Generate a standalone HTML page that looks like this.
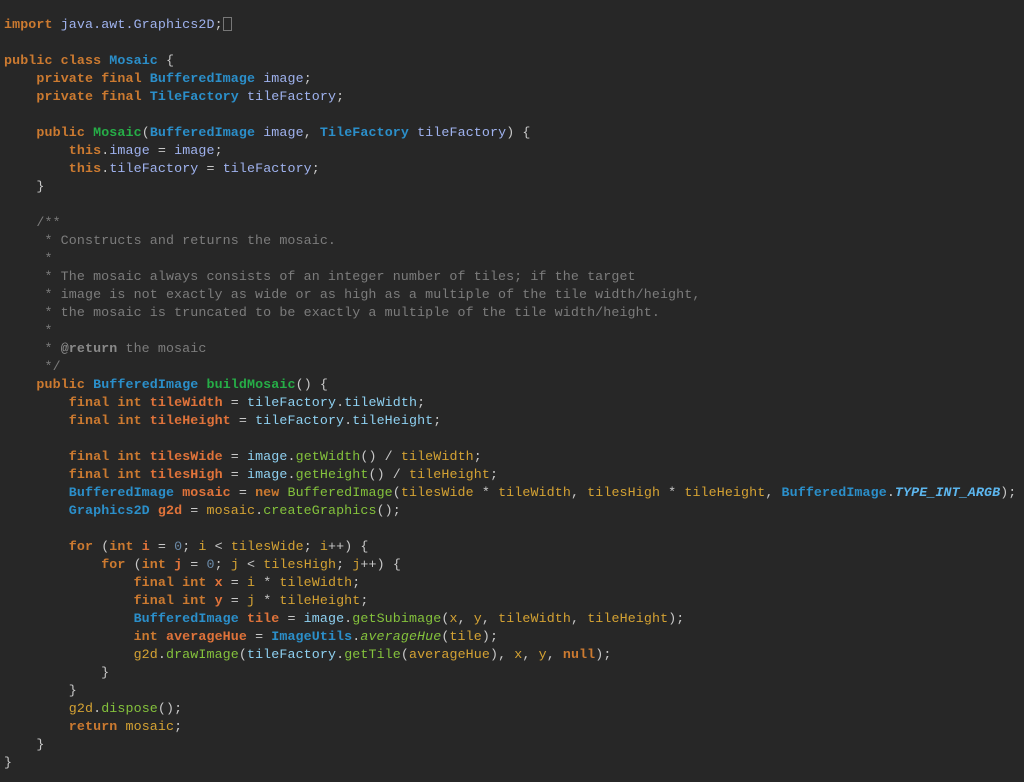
<!DOCTYPE html>
<html><head><meta charset="utf-8"><style>
html,body{margin:0;padding:0;background:#272727;width:1024px;height:782px;overflow:hidden}
pre{margin:0;padding:17px 0 0 4px;font-family:"Liberation Mono",monospace;font-size:13.33px;line-height:18px;color:#c8c8c8;letter-spacing:0.1px}
.k{color:#cc7a30;font-weight:bold}
.t{color:#2b8fca;font-weight:bold}
.f{color:#9fb2ee}
.p{color:#d4a233}
.v{color:#e0733a;font-weight:bold}
.m{color:#84c23c}
.g{color:#26ad47;font-weight:bold}
.c{color:#7c7c7c}
.cb{color:#8a8a8a;font-weight:bold}
.n{color:#6b8aa8}
.s{color:#5cb6ee;font-style:italic;font-weight:bold}
.i{color:#8ed0f0}
.cur{display:inline-block;width:9px;height:14px;border:1px solid #777;vertical-align:-3px;box-sizing:border-box}
</style></head><body><pre><span class="k">import</span> <span class="f">java.awt.Graphics2D</span>;<span class="cur"></span>

<span class="k">public class</span> <span class="t">Mosaic</span> {
    <span class="k">private final</span> <span class="t">BufferedImage</span> <span class="f">image</span>;
    <span class="k">private final</span> <span class="t">TileFactory</span> <span class="f">tileFactory</span>;

    <span class="k">public</span> <span class="g">Mosaic</span>(<span class="t">BufferedImage</span> <span class="f">image</span>, <span class="t">TileFactory</span> <span class="f">tileFactory</span>) {
        <span class="k">this</span>.<span class="f">image</span> = <span class="f">image</span>;
        <span class="k">this</span>.<span class="f">tileFactory</span> = <span class="f">tileFactory</span>;
    }

<span class="c">    /**
     * Constructs and returns the mosaic.
     *
     * The mosaic always consists of an integer number of tiles; if the target
     * image is not exactly as wide or as high as a multiple of the tile width/height,
     * the mosaic is truncated to be exactly a multiple of the tile width/height.
     *
     * <span class="cb">@return</span> the mosaic
     */</span>
    <span class="k">public</span> <span class="t">BufferedImage</span> <span class="g">buildMosaic</span>() {
        <span class="k">final int</span> <span class="v">tileWidth</span> = <span class="i">tileFactory</span>.<span class="i">tileWidth</span>;
        <span class="k">final int</span> <span class="v">tileHeight</span> = <span class="i">tileFactory</span>.<span class="i">tileHeight</span>;

        <span class="k">final int</span> <span class="v">tilesWide</span> = <span class="i">image</span>.<span class="m">getWidth</span>() / <span class="p">tileWidth</span>;
        <span class="k">final int</span> <span class="v">tilesHigh</span> = <span class="i">image</span>.<span class="m">getHeight</span>() / <span class="p">tileHeight</span>;
        <span class="t">BufferedImage</span> <span class="v">mosaic</span> = <span class="k">new</span> <span class="m">BufferedImage</span>(<span class="p">tilesWide</span> * <span class="p">tileWidth</span>, <span class="p">tilesHigh</span> * <span class="p">tileHeight</span>, <span class="t">BufferedImage</span>.<span class="s">TYPE_INT_ARGB</span>);
        <span class="t">Graphics2D</span> <span class="v">g2d</span> = <span class="p">mosaic</span>.<span class="m">createGraphics</span>();

        <span class="k">for</span> (<span class="k">int</span> <span class="v">i</span> = <span class="n">0</span>; <span class="p">i</span> &lt; <span class="p">tilesWide</span>; <span class="p">i</span>++) {
            <span class="k">for</span> (<span class="k">int</span> <span class="v">j</span> = <span class="n">0</span>; <span class="p">j</span> &lt; <span class="p">tilesHigh</span>; <span class="p">j</span>++) {
                <span class="k">final int</span> <span class="v">x</span> = <span class="p">i</span> * <span class="p">tileWidth</span>;
                <span class="k">final int</span> <span class="v">y</span> = <span class="p">j</span> * <span class="p">tileHeight</span>;
                <span class="t">BufferedImage</span> <span class="v">tile</span> = <span class="i">image</span>.<span class="m">getSubimage</span>(<span class="p">x</span>, <span class="p">y</span>, <span class="p">tileWidth</span>, <span class="p">tileHeight</span>);
                <span class="k">int</span> <span class="v">averageHue</span> = <span class="t">ImageUtils</span>.<span class="m" style="font-style:italic">averageHue</span>(<span class="p">tile</span>);
                <span class="p">g2d</span>.<span class="m">drawImage</span>(<span class="i">tileFactory</span>.<span class="m">getTile</span>(<span class="p">averageHue</span>), <span class="p">x</span>, <span class="p">y</span>, <span class="k">null</span>);
            }
        }
        <span class="p">g2d</span>.<span class="m">dispose</span>();
        <span class="k">return</span> <span class="p">mosaic</span>;
    }
}</pre></body></html>
